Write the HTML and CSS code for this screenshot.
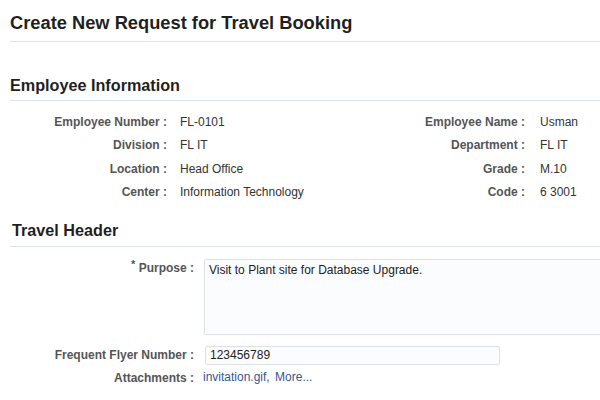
FILE: index.html
```html
<!DOCTYPE html>
<html>
<head>
<meta charset="utf-8">
<link rel="stylesheet" href="styles.css">
</head>
<body>
<div class="page">
  <h1 class="title">Create New Request for Travel Booking</h1>

  <h2 class="section">Employee Information</h2>
  <div class="info">
    <div class="lbl">Employee Number :</div><div class="val">FL-0101</div>
    <div class="lbl">Employee Name :</div><div class="val val2">Usman</div>
    <div class="lbl">Division :</div><div class="val">FL IT</div>
    <div class="lbl">Department :</div><div class="val val2">FL IT</div>
    <div class="lbl">Location :</div><div class="val">Head Office</div>
    <div class="lbl">Grade :</div><div class="val val2">M.10</div>
    <div class="lbl">Center :</div><div class="val">Information Technology</div>
    <div class="lbl">Code :</div><div class="val val2">6 3001</div>
  </div>

  <h2 class="section section-travel">Travel Header</h2>
  <div class="form">
    <div class="flbl"><span class="req">*</span> Purpose :</div>
    <div class="textarea">Visit to Plant site for Database Upgrade.</div>
    <div class="flbl">Frequent Flyer Number :</div>
    <div class="input">123456789</div>
    <div class="flbl flbl-att">Attachments :</div>
    <div class="links"><a class="link">invitation.gif,</a> <a class="link">More...</a></div>
  </div>
</div>
</body>
</html>
```

FILE: styles.css
```css
html, body {
  margin: 0;
  padding: 0;
  background: #ffffff;
}

.page {
  width: 600px;
  height: 400px;
  overflow: hidden;
  font-family: "Liberation Sans", Arial, sans-serif;
  color: #333333;
}

.title {
  margin: 0 0 0 10px;
  padding: 12px 0 8px 0;
  font-size: 18.3px;
  line-height: 21px;
  font-weight: bold;
  color: #1f1f1f;
  border-bottom: 1px solid #dbe3ec;
}

.section {
  margin: 33px 0 0 10px;
  padding: 0 0 5px 0;
  font-size: 16.2px;
  line-height: 20px;
  font-weight: bold;
  color: #1f1f1f;
  border-bottom: 1px solid #dbe3ec;
}

.section-travel {
  margin-top: 15px;
  margin-left: 10px;
  padding-left: 2px;
  padding-bottom: 6px;
}

.info {
  display: grid;
  grid-template-columns: 167px 1fr auto 75px;
  grid-auto-rows: 23.4px;
  margin-top: 10px;
  font-size: 12px;
  line-height: 23px;
}

.lbl {
  text-align: right;
  color: #555555;
  font-weight: bold;
  white-space: nowrap;
}

.val {
  padding-left: 13px;
  color: #333333;
  white-space: nowrap;
}

.val2 {
  padding-left: 15px;
}

.form {
  display: grid;
  grid-template-columns: 194px 1fr;
  column-gap: 10px;
  row-gap: 0;
  margin-top: 12px;
  font-size: 12px;
  line-height: 16px;
}

.flbl {
  text-align: right;
  color: #555555;
  font-weight: bold;
  white-space: nowrap;
  padding-top: 1px;
}

.flbl-att {
  padding-top: 5px;
}

.req {
  color: #3b5a9a;
  position: relative;
  top: -4px;
  font-size: 11px;
}

.textarea {
  height: 70px;
  margin-right: -10px;
  padding: 2px 4px;
  border: 1px solid #dde1e6;
  border-radius: 2px;
  background: #fbfcfe;
  color: #222222;
  margin-bottom: 11px;
}

.input {
  width: 285px;
  height: 17px;
  margin-left: 1px;
  padding: 0 4px;
  border: 1px solid #dde1e6;
  border-radius: 2px;
  background: #fbfcfe;
  color: #222222;
  line-height: 17px;
}

.links {
  padding-top: 4px;
  margin-left: -1px;
  color: #3c5592;
}

.link {
  color: #3c5592;
  text-decoration: none;
}

.link + .link {
  margin-left: 2px;
}
```
